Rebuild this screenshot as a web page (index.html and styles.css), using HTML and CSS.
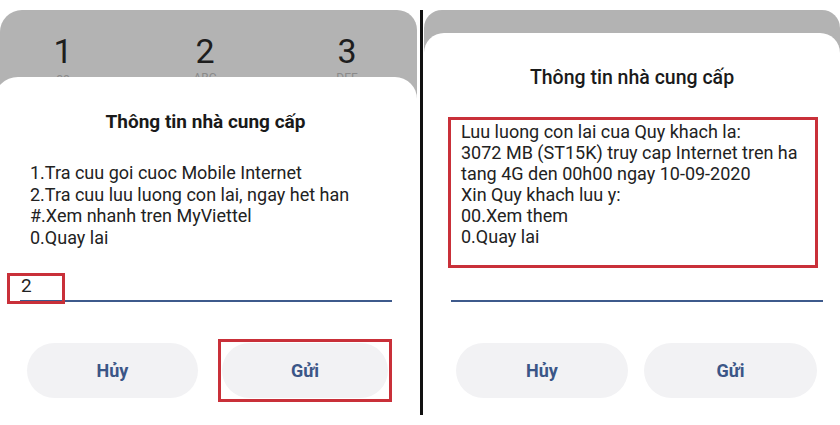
FILE: index.html
```html
<!DOCTYPE html>
<html lang="vi">
<head>
    <meta charset="UTF-8">
    <meta name="viewport" content="width=device-width, initial-scale=1.0">
    <title>Thông tin nhà cung cấp</title>
    <link rel="stylesheet" href="styles.css">
</head>
<body>
    <div class="page">
        <section class="phone phone-left">
            <div class="screen">
                <div class="keypad">
                    <div class="key"><span class="num">1</span><span class="sub">oo</span></div>
                    <div class="key"><span class="num">2</span><span class="sub">ABC</span></div>
                    <div class="key"><span class="num">3</span><span class="sub">DEF</span></div>
                </div>
                <div class="dialog">
                    <h2 class="title">Thông tin nhà cung cấp</h2>
                    <div class="message">
                        1.Tra cuu goi cuoc Mobile Internet<br>
                        2.Tra cuu luu luong con lai, ngay het han<br>
                        #.Xem nhanh tren MyViettel<br>
                        0.Quay lai
                    </div>
                    <div class="field">
                        <span class="value">2</span>
                        <span class="field-mark"></span>
                    </div>
                    <div class="actions">
                        <button class="action">Hủy</button>
                        <div class="mark"><button class="action">Gửi</button></div>
                    </div>
                </div>
            </div>
        </section>

        <div class="divider"></div>

        <section class="phone phone-right">
            <div class="screen">
                <div class="dialog">
                    <h2 class="title">Thông tin nhà cung cấp</h2>
                    <div class="message">
                        Luu luong con lai cua Quy khach la:<br>
                        3072 MB (ST15K) truy cap Internet tren ha<br>
                        tang 4G den 00h00 ngay 10-09-2020<br>
                        Xin Quy khach luu y:<br>
                        00.Xem them<br>
                        0.Quay lai
                    </div>
                    <div class="field"></div>
                    <div class="actions">
                        <button class="action">Hủy</button>
                        <button class="action">Gửi</button>
                    </div>
                </div>
            </div>
        </section>
    </div>
</body>
</html>
```

FILE: styles.css
```css
body {
    margin: 0;
    background: #fff;
    font-family: Roboto, "Liberation Sans", sans-serif;
    color: #222;
    overflow: hidden;
}

.page {
    display: flex;
    width: 840px;
    height: 425px;
    overflow: hidden;
    background: #fff;
}

.phone {
    padding-top: 10px;
    display: flex;
    flex-direction: column;
    box-sizing: border-box;
    height: 425px;
}

.phone-left {
    width: 417px;
    flex: none;
}

.phone-right {
    flex: 1;
}

.screen {
    flex: 1;
    display: flex;
    flex-direction: column;
    background: #b3b3b3;
}

.phone-left .screen {
    border-radius: 22px 20px 0 0;
}

.phone-right .screen {
    border-radius: 18px 18px 0 0;
    padding-top: 23px;
}

.divider {
    flex: none;
    width: 3px;
    margin: 10px 1px 10px 3px;
    background: #111;
}

/* keypad behind the left dialog */
.keypad {
    display: grid;
    grid-template-columns: repeat(3, 142px);
    margin-left: -8px;
    height: 67px;
    overflow: hidden;
    box-sizing: border-box;
    padding-top: 21px;
}

.key {
    display: flex;
    flex-direction: column;
    align-items: center;
}

.num {
    font-size: 34px;
    line-height: 40px;
    font-weight: 400;
    color: #1e1e1e;
}

.sub {
    font-size: 12px;
    line-height: 14px;
    color: #8a8a8a;
}

/* dialog */
.dialog {
    flex: 1;
    background: #fff;
    display: flex;
    flex-direction: column;
    align-items: flex-start;
    padding-top: 33px;
}

.phone-left .dialog {
    margin-left: -6px;
    border-radius: 24px 22px 0 0;
}

.phone-right .dialog {
    border-radius: 20px 20px 0 0;
}

.title {
    align-self: stretch;
    margin: 0;
    text-align: center;
    font-size: 19px;
    line-height: 24px;
    font-weight: 700;
    color: #1a1a1a;
}

.phone-right .title {
    font-size: 19.5px;
    font-weight: 500;
}

.message {
    font-size: 18px;
    line-height: 21.5px;
    color: #222;
}

.phone-left .message {
    margin: 28px 0 0 36px;
}

.phone-right .message {
    margin: 27px 0 0 24px;
    width: 370px;
    height: 151px;
    box-sizing: border-box;
    border: 3px solid #c93039;
    padding: 1px 0 0 10px;
    line-height: 21px;
}

.field {
    position: relative;
    width: 372px;
    height: 30px;
    box-sizing: border-box;
    border-bottom: 2px solid #3e5a8c;
}

.phone-left .field {
    margin: 24px 0 0 26px;
}

.phone-right .field {
    margin: 4px 0 0 27px;
}

.value {
    display: block;
    padding-left: 1px;
    font-size: 19px;
    line-height: 28px;
    color: #222;
}

/* red highlight over the typed value */
.field-mark {
    position: absolute;
    left: -13px;
    top: 1px;
    width: 58px;
    height: 31px;
    box-sizing: border-box;
    border: 3px solid #c93039;
}

.actions {
    display: grid;
    align-items: center;
}

.phone-left .actions {
    grid-template-columns: 171px 174px;
    column-gap: 20px;
    margin: 37px 0 0 33px;
}

.phone-right .actions {
    grid-template-columns: 172px 173px;
    column-gap: 16px;
    margin: 41px 0 0 32px;
}

.action {
    display: block;
    width: 100%;
    height: 55px;
    border: none;
    border-radius: 28px;
    background: #f2f2f4;
    color: #3b5687;
    font-family: Roboto, "Liberation Sans", sans-serif;
    font-size: 18px;
    font-weight: 700;
    padding: 0;
}

.mark {
    border: 3px solid #c93039;
    padding: 1px;
}
```
